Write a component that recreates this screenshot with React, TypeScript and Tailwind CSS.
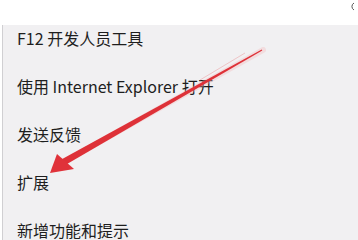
import React from "react";

const items = [
  "F12 开发人员工具",
  "使用 Internet Explorer 打开",
  "发送反馈",
  "扩展",
  "新增功能和提示",
];

export default function App() {
  return (
    <div
      className="relative w-[358px] h-[240px] overflow-hidden bg-white flex flex-col"
      style={{ fontFamily: '"Noto Sans CJK SC", "Noto Sans", sans-serif' }}
    >
      <div className="h-[25px] shrink-0 bg-white" />
      <div className="flex-1 ml-[2px] border-l border-[#d0cfd2] bg-[#f1f0f2] pl-[14px] pt-[3px] flex flex-col gap-7">
        {items.map((t) => (
          <div key={t} className="h-5 leading-5 text-[16px] text-[#1e1e1e] whitespace-nowrap">
            {t}
          </div>
        ))}
      </div>
      <svg
        className="absolute left-0 top-0 pointer-events-none"
        width="358"
        height="240"
        viewBox="0 0 358 240"
      >
        <line x1="263" y1="50" x2="62" y2="163" stroke="#f4b8bb" strokeWidth="6" strokeLinecap="round" opacity="0.35" />
        <line x1="245" y1="53" x2="200" y2="80" stroke="#eeb3b6" strokeWidth="1" opacity="0.7" />
        <polygon points="261.75,49.56 262.25,50.44 63.6,166 60.4,160" fill="#de3138" />
        <polygon points="50,173 57,154 74,169" fill="#e0323a" />
        <path d="M354 3 A4 4 0 0 0 354 10" stroke="#555" strokeWidth="1" fill="none" />
      </svg>
    </div>
  );
}
